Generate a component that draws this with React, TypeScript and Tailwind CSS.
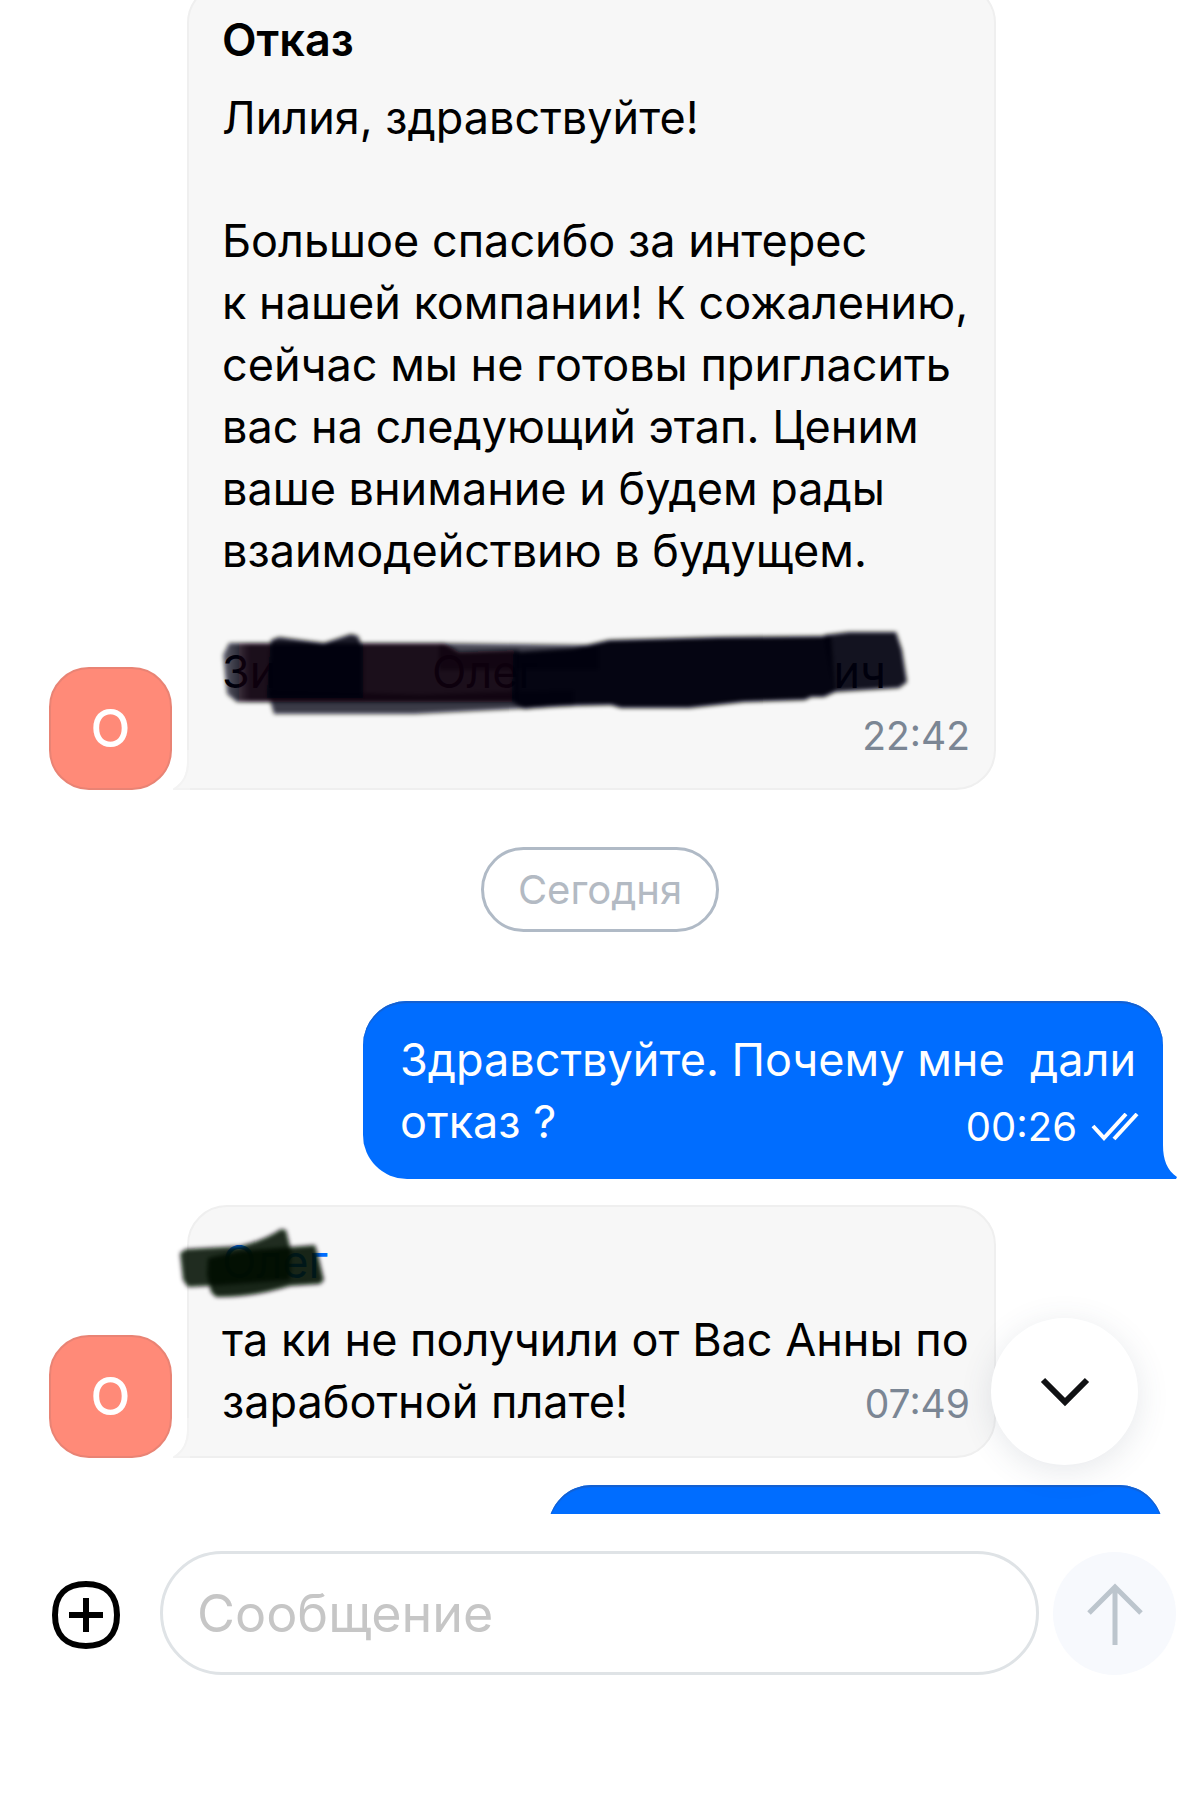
import React from "react";

const BODY = `Большое спасибо за интерес
к нашей компании! К сожалению,
сейчас мы не готовы пригласить
вас на следующий этап. Ценим
ваше внимание и будем рады
взаимодействию в будущем.`;

function Avatar() {
  return (
    <div className="flex size-[123px] shrink-0 items-center justify-center rounded-[40px] border-2 border-[#e98374] bg-[#ff8a78] text-[52px] font-medium leading-none text-white">
      О
    </div>
  );
}

function IncomingTail() {
  return (
    <svg className="absolute -bottom-0.5 -left-4 h-10 w-[17px]" viewBox="0 0 17 40" fill="none" aria-hidden="true">
      <path d="M17 0H14V12C14 24 10 33 0 40H17Z" fill="#f7f7f7" />
      <path d="M15 0V12C15 24 11 33 1 39H17" stroke="#f3f3f3" strokeWidth="2" />
    </svg>
  );
}

function OutgoingTail() {
  return (
    <svg className="absolute bottom-0 -right-3.5 h-12 w-[15px]" viewBox="0 0 15 48" aria-hidden="true">
      <path d="M0 0H1V14C1 29 5 39 15 46L14 48H0Z" fill="#006dff" />
    </svg>
  );
}

function IncomingBubble({ children }: { children: React.ReactNode }) {
  return (
    <article className="flex items-end gap-[15px] pl-[49px]">
      <Avatar />
      <div className="relative w-[809px] rounded-[40px] rounded-bl-none border-2 border-[#efefef] bg-[#f7f7f7] pt-6 pr-6 pb-5 pl-[33px] text-black">
        {children}
        <IncomingTail />
      </div>
    </article>
  );
}

function Time({ children }: { children: string }) {
  return <time className="block text-right text-[39px] leading-[65px] text-[#7b8694]">{children}</time>;
}

// Marker strokes over the signature
function SignatureMarker() {
  return (
    <svg className="absolute -left-2 -top-4 h-[95px] w-[705px]" viewBox="215 625 705 95" aria-hidden="true">
      <defs>
        <filter id="marker" x="-5%" y="-20%" width="110%" height="140%">
          <feGaussianBlur stdDeviation="2" />
        </filter>
        <linearGradient id="ink" gradientUnits="userSpaceOnUse" x1="222" y1="0" x2="250" y2="0">
          <stop offset="0" stopColor="#08020e" stopOpacity="0.6" />
          <stop offset="1" stopColor="#08020e" stopOpacity="0.94" />
        </linearGradient>
      </defs>
      <g filter="url(#marker)" fill="#05000c">
        <path d="M268 690L420 695L575 690V706L415 714L275 714Z" fillOpacity="0.76" />
        <path d="M440 643L600 645V670H440Z" fillOpacity="0.7" />
        <path d="M230 643H445L460 652L520 650V702H238L228 694L224 655Z" fill="url(#ink)" />
        <path d="M272 640L280 637L325 643L352 634L359 636L364 648V698H268Z" fillOpacity="0.88" />
        <path d="M515 652L575 648L610 640L720 637L832 636L836 692L825 697H812L806 700L745 702L690 708H622L612 705L560 706L525 709L513 702Z" fillOpacity="0.98" />
        <path d="M825 635L850 632H897L903 650L908 682L900 688L835 692Z" fillOpacity="0.92" />
      </g>
    </svg>
  );
}

function NameMarker() {
  return (
    <svg className="absolute -left-[50px] -top-2 h-[80px] w-[160px]" viewBox="172 1223 160 80" aria-hidden="true">
      <g filter="url(#marker)" fill="#061003">
        <path d="M180 1253L186 1249L240 1246Q265 1240 281 1229L286 1230L291 1250L290 1280L208 1286L188 1287L183 1280Z" fillOpacity="0.87" />
        <path d="M208 1258L240 1251L290 1247L315 1245L318 1255L324 1280L320 1284L290 1286Q250 1298 216 1297L211 1292L207 1275Z" fillOpacity="0.9" />
      </g>
    </svg>
  );
}

export default function App() {
  return (
    <main className="flex h-screen flex-col overflow-hidden bg-white font-['Inter','Noto_Sans',sans-serif] text-[45px] leading-[62px]">
      <section className="relative min-h-0 flex-1 overflow-hidden">
        <div className="-mt-[17px] flex flex-col">
          <IncomingBubble>
            <h2 className="mb-4 font-semibold">Отказ</h2>
            <p>Лилия, здравствуйте!</p>
            <p className="mt-[61px] whitespace-pre">{BODY}</p>
            <div className="relative mt-[59px] flex w-[664px]">
              <span className="w-[210px]">Зи</span>
              <span>Олег</span>
              <span className="ml-auto">ич</span>
              <SignatureMarker />
            </div>
            <Time>22:42</Time>
          </IncomingBubble>

          <div className="mt-[57px] self-center rounded-full border-3 border-[#b0bac6] px-[34px] py-2 text-[40px] leading-[63px] text-[#b3bac3]">
            Сегодня
          </div>

          <article className="relative mt-[69px] mr-[37px] w-[800px] self-end rounded-[44px] rounded-br-none bg-[#006dff] pt-7 pr-6 pb-6 pl-[37px] text-white shadow-[inset_0_2px_1px_#1560cf]">
            <p className="whitespace-pre">{"Здравствуйте. Почему мне  дали"}</p>
            <div className="flex items-start justify-between">
              <p>отказ ?</p>
              <div className="flex items-center gap-3.5 pt-2 text-[40px] leading-[56px]">
                <time>00:26</time>
                <svg className="h-7 w-12" viewBox="0 0 48 28" fill="none" stroke="currentColor" strokeWidth="4" aria-label="Прочитано">
                  <path d="M2 13L13 25L35 1" />
                  <path d="M23 26L46 1" />
                </svg>
              </div>
            </div>
            <OutgoingTail />
          </article>

          <div className="mt-[26px]">
            <IncomingBubble>
              <div className="relative mb-4 w-fit text-[#006dff]">
                Олег
                <NameMarker />
              </div>
              <p className="whitespace-pre">та ки не получили от Вас Анны по</p>
              <div className="flex items-start justify-between">
                <p>заработной плате!</p>
                <Time>07:49</Time>
              </div>
            </IncomingBubble>
          </div>

          <article className="mt-[27px] mr-[37px] h-[178px] w-[615px] self-end rounded-[44px] rounded-br-none bg-[#006dff] shadow-[inset_0_2px_1px_#1560cf]" />
        </div>

        <button
          type="button"
          aria-label="Вниз"
          className="absolute right-[62px] bottom-[49px] flex size-[147px] items-center justify-center rounded-full bg-white shadow-[0_6px_32px_rgba(60,80,100,0.13)]"
        >
          <svg className="h-[30px] w-[50px]" viewBox="0 0 50 30" fill="none" stroke="#101113" strokeWidth="6" aria-hidden="true">
            <path d="M3 3L25 25L47 3" />
          </svg>
        </button>
      </section>

      <form className="flex h-[304px] shrink-0 items-start pt-[37px] pr-6 pl-[52px]" onSubmit={(e) => e.preventDefault()}>
        <button type="button" aria-label="Прикрепить" className="mt-[30px] mr-10">
          <svg className="size-[68px]" viewBox="0 0 68 68" fill="none" stroke="#000" aria-hidden="true">
            <path d="M34 3C54 3 65 14 65 34S54 65 34 65S3 54 3 34S14 3 34 3Z" strokeWidth="6" />
            <path d="M34 17V51M17 34H51" strokeWidth="6" />
          </svg>
        </button>
        <input
          type="text"
          aria-label="Сообщение"
          placeholder="Сообщение"
          className="h-[124px] min-w-0 flex-1 rounded-full border-3 border-[#dfe3e6] px-[34px] text-[52px] text-black outline-none placeholder:text-[#c6c6c6]"
        />
        <button type="submit" aria-label="Отправить" className="mt-px ml-3.5 flex size-[123px] items-center justify-center rounded-full bg-[#f7f9fd]">
          <svg className="h-[62px] w-14" viewBox="0 0 56 62" fill="none" stroke="#bcc5cd" strokeWidth="5" aria-hidden="true">
            <path d="M2 30L28 4L54 30M28 4V62" />
          </svg>
        </button>
      </form>
    </main>
  );
}
